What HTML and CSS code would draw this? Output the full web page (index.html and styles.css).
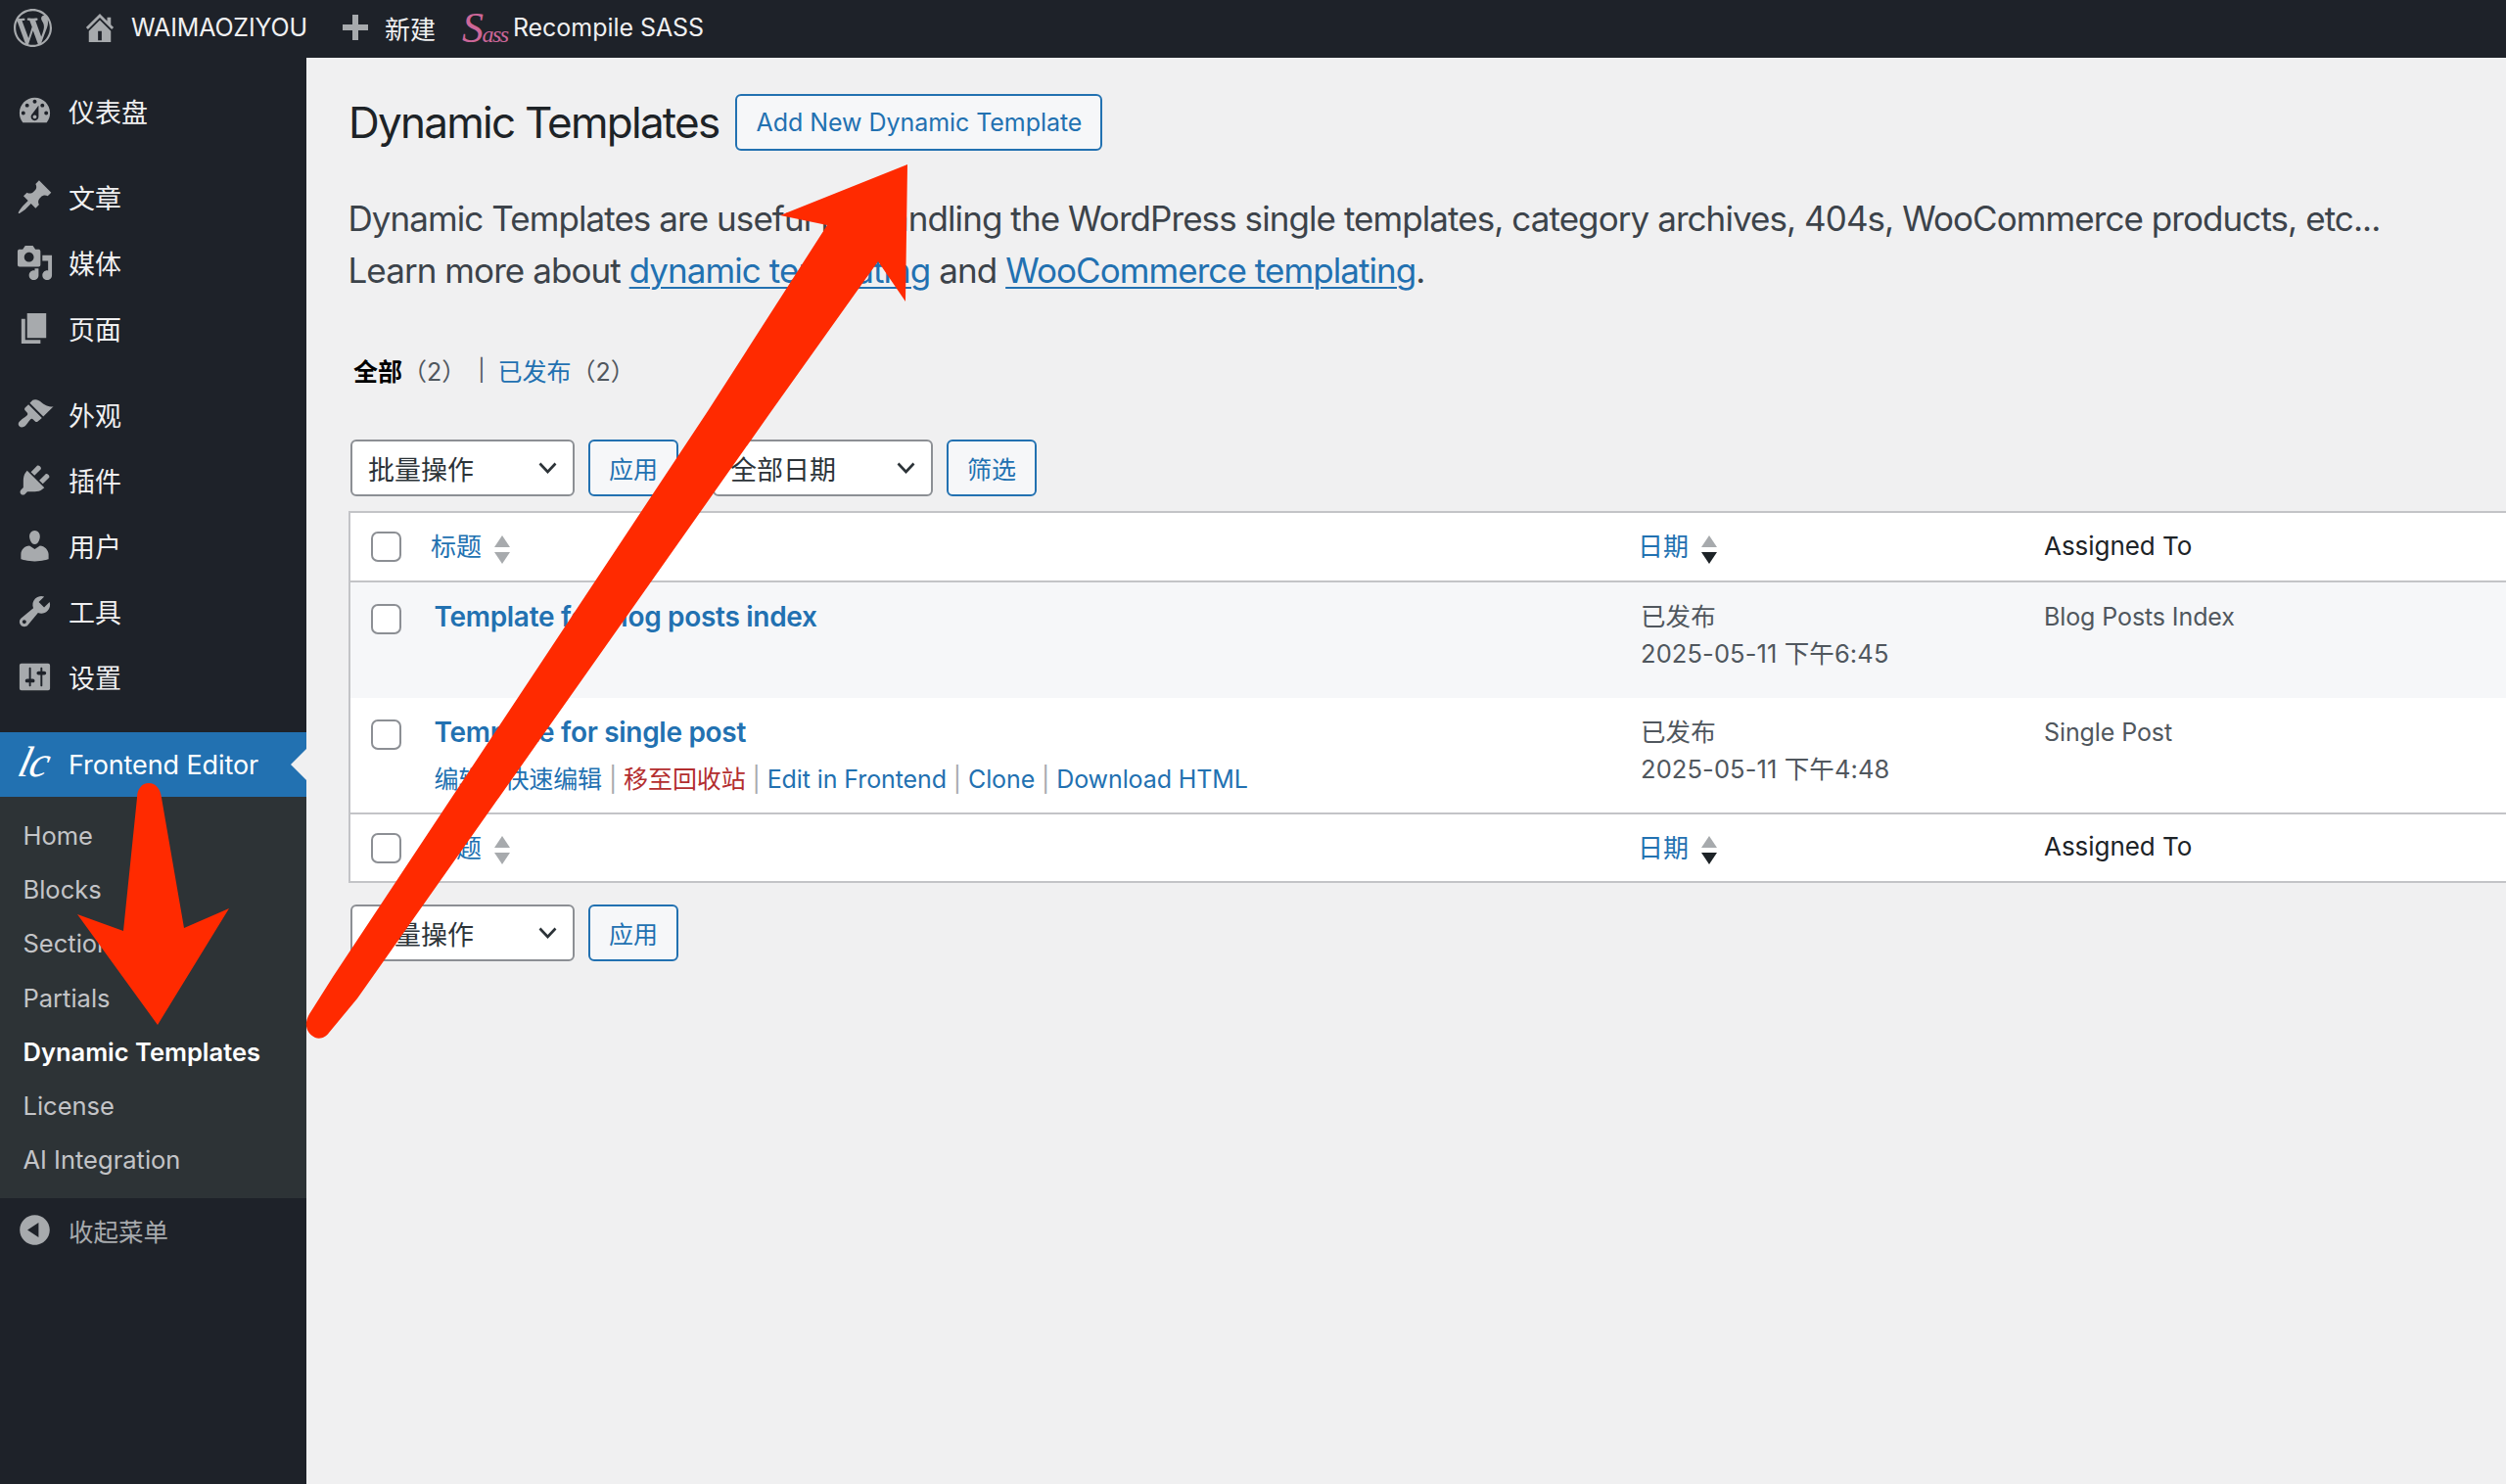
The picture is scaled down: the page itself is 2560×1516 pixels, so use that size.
FILE: index.html
```html
<!DOCTYPE html>
<html lang="zh-CN">
<head>
<meta charset="utf-8">
<title>Dynamic Templates</title>
<link rel="stylesheet" href="styles.css">
</head>
<body>
<header class="adminbar">
  <svg class="ab-wp" viewBox="0 0 20 20"><path d="M20 10c0-5.51-4.49-10-10-10C4.48 0 0 4.49 0 10c0 5.52 4.48 10 10 10 5.51 0 10-4.48 10-10zM7.78 15.37L4.37 6.22c.55-.02 1.17-.08 1.17-.08.5-.06.44-1.13-.06-1.11 0 0-1.45.11-2.37.11-.18 0-.37 0-.58-.01C4.12 2.69 6.87 1.11 10 1.11c2.33 0 4.45.87 6.05 2.34-.68-.11-1.65.39-1.65 1.58 0 .74.45 1.36.9 2.1.35.61.55 1.36.55 2.46 0 1.49-1.4 5-1.4 5l-3.03-8.37c.54-.02.82-.17.82-.17.5-.05.44-1.25-.06-1.22 0 0-1.44.12-2.38.12-.87 0-2.33-.12-2.33-.12-.5-.03-.56 1.2-.06 1.22l.92.08 1.26 3.41zM17.41 10c.24-.64.74-1.87.43-4.25.7 1.29 1.05 2.71 1.05 4.25 0 3.29-1.73 6.24-4.4 7.78.97-2.59 1.94-5.2 2.92-7.78zM6.1 18.09C3.12 16.65 1.11 13.53 1.11 10c0-1.3.23-2.48.72-3.59C3.25 10.3 4.67 14.2 6.1 18.09zm4.03-6.63l2.58 6.98c-.86.29-1.76.45-2.71.45-.79 0-1.57-.11-2.29-.33.81-2.38 1.62-4.74 2.42-7.1z"/></svg>
  <svg class="ab-home" viewBox="2 2 16 16"><path d="M16 8.5l1.53 1.53-1.06 1.06L10 4.62l-6.47 6.47-1.06-1.06L10 2.5l4 4v-2h2v4zm-6-2.46l6 5.99V18H4v-6.03zM11 17v-5H9v5h2z"/></svg>
  <span class="ab-site">WAIMAOZIYOU</span>
  <svg class="ab-plus" viewBox="0 0 26 26"><path d="M10 0h6v10h10v6H16v10h-6V16H0v-6h10z"/></svg>
  <span class="ab-new">新建</span>
  <span class="ab-sass">Sass</span>
  <span class="ab-recompile">Recompile SASS</span>
</header>

<div class="layout">
  <nav class="sidebar">
    <ul class="menu">
      <li class="item"><svg class="mi" viewBox="0 0 20 20"><path d="M3.76 16h12.48c1.1-1.37 1.76-3.11 1.76-5 0-4.42-3.58-8-8-8s-8 3.58-8 8c0 1.89.66 3.63 1.76 5zM10 4c.55 0 1 .45 1 1s-.45 1-1 1-1-.45-1-1 .45-1 1-1zM6 6c.55 0 1 .45 1 1s-.45 1-1 1-1-.45-1-1 .45-1 1-1zm8 0c.55 0 1 .45 1 1s-.45 1-1 1-1-.45-1-1 .45-1 1-1zm-5.37 5.55L12 7v6c0 1.1-.9 2-2 2s-2-.9-2-2c0-.57.24-1.08.63-1.45zM4 10c.55 0 1 .45 1 1s-.45 1-1 1-1-.45-1-1 .45-1 1-1zm12 0c.55 0 1 .45 1 1s-.45 1-1 1-1-.45-1-1 .45-1 1-1zm-5 3c0-.55-.45-1-1-1s-1 .45-1 1 .45 1 1 1 1-.45 1-1z"/></svg>仪表盘</li>
      <li class="sep"></li>
      <li class="item"><svg class="mi" viewBox="0 0 20 20"><path d="M10.44 3.02l1.82-1.82 6.36 6.35-1.83 1.82c-1.05-.68-2.48-.57-3.41.36l-.75.75c-.92.93-1.04 2.35-.35 3.41l-1.83 1.82-2.41-2.41-2.8 2.79c-.42.42-3.38 2.71-3.8 2.29s1.86-3.39 2.28-3.81l2.79-2.79L4.1 9.36l1.83-1.82c1.05.69 2.48.57 3.4-.36l.75-.75c.93-.92 1.05-2.35.36-3.41z"/></svg>文章</li>
      <li class="item"><svg class="mi" viewBox="0 0 20 20"><path d="M13 11V4c0-.55-.45-1-1-1h-1.67L9 1H5L3.67 3H2c-.55 0-1 .45-1 1v7c0 .55.45 1 1 1h10c.55 0 1-.45 1-1zM7 4.5c1.38 0 2.5 1.12 2.5 2.5S8.38 9.5 7 9.5 4.5 8.38 4.5 7 5.62 4.5 7 4.5zM14 6h5v10.5c0 1.38-1.12 2.5-2.5 2.5S14 17.88 14 16.5s1.12-2.5 2.5-2.5c.17 0 .34.02.5.05V9h-3V6zm-4 8.05V13h2v3.5c0 1.38-1.12 2.5-2.5 2.5S7 17.88 7 16.5 8.12 14 9.5 14c.17 0 .34.02.5.05z"/></svg>媒体</li>
      <li class="item"><svg class="mi" viewBox="0 0 20 20"><path d="M6 15V2h10v13H6zm-1 1h8v2H3V5h2v11z"/></svg>页面</li>
      <li class="sep"></li>
      <li class="item"><svg class="mi" viewBox="0 0 20 20"><path d="M14.48 11.06L7.41 3.99l1.5-1.5c.5-.56 2.3-.47 3.51.32 1.21.8 1.43 1.28 2.91 2.1 1.18.64 2.45 1.26 4.45.85zm-.71.71L6.7 4.7 4.93 6.47c-.39.39-.39 1.02 0 1.41l1.06 1.06c.39.39.39 1.03 0 1.42-.6.6-1.43 1.11-2.21 1.69-.35.26-.7.53-1.01.84C1.43 13.71.96 15.12 1.98 16.14c.75.75 2.2.59 3.21-.42.31-.31.58-.66.84-1.01.58-.78 1.09-1.61 1.69-2.21.39-.39 1.03-.39 1.42 0l1.06 1.06c.39.39 1.02.39 1.41 0z"/></svg>外观</li>
      <li class="item"><svg class="mi" viewBox="0 0 20 20"><path d="M13.11 4.36L9.87 7.6 8 5.73l3.24-3.24c.35-.34 1.05-.2 1.56.32.52.51.66 1.21.31 1.55zm-8 1.77l.91-1.12 9.01 9.01-1.19.84c-.71.71-2.63 1.16-3.82 1.16H6.14L4.9 17.26c-.59.59-1.54.59-2.12 0-.59-.58-.59-1.53 0-2.12l1.24-1.24v-3.88c0-1.13.4-3.19 1.09-3.89zm7.26 3.97l3.24-3.24c.34-.35 1.04-.21 1.55.31.52.51.66 1.21.31 1.55l-3.24 3.25z"/></svg>插件</li>
      <li class="item"><svg class="mi" viewBox="0 0 20 20"><path d="M10 9.25c-2.27 0-2.73-3.44-2.73-3.44C7 4.02 7.82 2 9.97 2c2.16 0 2.98 2.02 2.71 3.81 0 0-.41 3.44-2.68 3.44zm0 2.57L12.72 10c2.39 0 4.52 2.33 4.52 4.53v2.49s-3.65 1.13-7.24 1.13c-3.65 0-7.24-1.13-7.24-1.13v-2.49c0-2.25 1.94-4.48 4.47-4.48z"/></svg>用户</li>
      <li class="item"><svg class="mi" viewBox="0 0 20 20"><path d="M16.68 9.77c-1.34 1.34-3.3 1.67-4.95.99l-5.41 6.52c-.99.99-2.59.99-3.58 0s-.99-2.59 0-3.57l6.52-5.42c-.68-1.65-.35-3.61.99-4.95 1.28-1.28 3.12-1.62 4.72-1.06l-2.89 2.89 2.82 2.82 2.86-2.87c.53 1.58.18 3.39-1.08 4.65zM3.81 16.21c.4.39 1.04.39 1.43 0 .4-.4.4-1.04 0-1.43-.39-.4-1.03-.4-1.43 0-.39.39-.39 1.03 0 1.43z"/></svg>工具</li>
      <li class="item"><svg class="mi" viewBox="0 0 20 20"><path d="M18 16V4c0-.55-.45-1-1-1H3c-.55 0-1 .45-1 1v12c0 .55.45 1 1 1h14c.55 0 1-.45 1-1zM8 11h1c.55 0 1 .45 1 1s-.45 1-1 1H8v1.5c0 .28-.22.5-.5.5s-.5-.22-.5-.5V13H6c-.55 0-1-.45-1-1s.45-1 1-1h1V5.5c0-.28.22-.5.5-.5s.5.22.5.5V11zm5-2h-1c-.55 0-1-.45-1-1s.45-1 1-1h1V5.5c0-.28.22-.5.5-.5s.5.22.5.5V7h1c.55 0 1 .45 1 1s-.45 1-1 1h-1v5.5c0 .28-.22.5-.5.5s-.5-.22-.5-.5V9z"/></svg>设置</li>
      <li class="sep sep-last"></li>
      <li class="item active"><span class="lc">lc</span>Frontend Editor</li>
      <li class="submenu">
        <a>Home</a><a>Blocks</a><a>Sections</a><a>Partials</a><a class="current">Dynamic Templates</a><a>License</a><a>AI Integration</a>
      </li>
      <li class="item collapse"><svg class="mi" viewBox="0 0 20 20"><path d="M10 2.16c4.33 0 7.84 3.51 7.84 7.84s-3.51 7.84-7.84 7.84S2.16 14.33 2.16 10 5.71 2.16 10 2.16zm2 11.72V6.12L6.18 9.97z"/></svg>收起菜单</li>
    </ul>
  </nav>

  <main class="content">
    <div class="head">
      <h1>Dynamic Templates</h1>
      <a class="btn btn-add">Add New Dynamic Template</a>
    </div>
    <p class="intro">Dynamic Templates are useful for handling the WordPress single templates, category archives, 404s, WooCommerce products, etc...<br>Learn more about <a>dynamic templating</a> and <a>WooCommerce templating</a>.</p>
    <div class="views"><b>全部</b><span class="count">（2）</span><span class="bar">|</span><a>已发布</a><span class="count">（2）</span></div>

    <div class="toolbar">
      <div class="select sel-bulk"><span>批量操作</span><svg class="chev" viewBox="0 0 19 12"><path d="M1.5 1.5l8 8.5 8-8.5"/></svg></div>
      <a class="btn btn-apply">应用</a>
      <div class="select sel-date"><span>全部日期</span><svg class="chev" viewBox="0 0 19 12"><path d="M1.5 1.5l8 8.5 8-8.5"/></svg></div>
      <a class="btn btn-apply">筛选</a>
    </div>

    <table class="list">
      <colgroup><col class="c-cb"><col class="c-title"><col class="c-date"><col class="c-assign"></colgroup>
      <thead>
        <tr>
          <td class="cb"><input type="checkbox"></td>
          <th class="t-head"><a>标题</a><svg class="sort" viewBox="0 0 16 29"><path class="s-up" d="M8 0l8 12H0z"/><path class="s-down" d="M0 17h16L8 29z"/></svg></th>
          <th class="d-head"><a>日期</a><svg class="sort" viewBox="0 0 16 29"><path class="s-up" d="M8 0l8 12H0z"/><path class="s-active" d="M0 17h16L8 29z"/></svg></th>
          <th class="plain">Assigned To</th>
        </tr>
      </thead>
      <tbody>
        <tr class="alt">
          <td class="cb"><input type="checkbox"></td>
          <td class="title"><a class="row-title">Template for blog posts index</a></td>
          <td class="date">已发布<br>2025-05-11 下午6:45</td>
          <td>Blog Posts Index</td>
        </tr>
        <tr class="last">
          <td class="cb"><input type="checkbox"></td>
          <td class="title"><a class="row-title">Template for single post</a>
            <div class="actions"><a>编辑</a> | <a>快速编辑</a> | <a class="trash">移至回收站</a> | <a>Edit in Frontend</a> | <a>Clone</a> | <a>Download HTML</a></div>
          </td>
          <td class="date">已发布<br>2025-05-11 下午4:48</td>
          <td>Single Post</td>
        </tr>
      </tbody>
      <tfoot>
        <tr>
          <td class="cb"><input type="checkbox"></td>
          <th class="t-head"><a>标题</a><svg class="sort" viewBox="0 0 16 29"><path class="s-up" d="M8 0l8 12H0z"/><path class="s-down" d="M0 17h16L8 29z"/></svg></th>
          <th class="d-head"><a>日期</a><svg class="sort" viewBox="0 0 16 29"><path class="s-up" d="M8 0l8 12H0z"/><path class="s-active" d="M0 17h16L8 29z"/></svg></th>
          <th class="plain">Assigned To</th>
        </tr>
      </tfoot>
    </table>

    <div class="toolbar toolbar-bottom">
      <div class="select sel-bulk"><span>批量操作</span><svg class="chev" viewBox="0 0 19 12"><path d="M1.5 1.5l8 8.5 8-8.5"/></svg></div>
      <a class="btn btn-apply">应用</a>
    </div>
  </main>
</div>

<svg class="annotations" viewBox="0 0 2560 1516">
  <path d="M927 168L797 220L845 230L723 420L340 998L316 1036C310 1046 313 1056 322 1060C328 1062 333 1059 336 1055L365 1020L788 420L897 267L925 308z"/>
  <path d="M140 815C140 806 145 800 152 800C159 800 164 806 165 815L188 948L234 928L161 1047L79 934L126 951z"/>
</svg>
</body>
</html>
```

FILE: styles.css
```css
* { box-sizing: border-box; }
html, body { margin: 0; height: 100%; }
body {
  width: 2560px;
  height: 1516px;
  overflow: hidden;
  position: relative;
  display: flex;
  flex-direction: column;
  background: #f0f0f1;
  font-family: Inter, "Noto Sans CJK SC", sans-serif;
  font-size: 25px;
  color: #3c434a;
}
a { color: #2271b1; text-decoration: none; }

/* admin bar */
.adminbar {
  flex: 0 0 59px;
  display: flex;
  align-items: center;
  background: #1e2229;
  color: #f0f0f1;
  font-size: 25px;
  padding: 0 0 3px 14px;
}
.adminbar svg { fill: #a7aaad; flex: none; }
.ab-wp { width: 39px; height: 39px; }
.ab-home { width: 30px; height: 30px; margin-left: 34px; }
.ab-site { margin-left: 17px; letter-spacing: -0.15px; }
.ab-plus { width: 26px; height: 26px; margin-left: 36px; }
.ab-new { margin-left: 17px; font-size: 26px; }
.ab-sass {
  display: inline-block;
  margin-left: 27px;
  width: 52px;
  font-family: "Liberation Serif", serif;
  font-style: italic;
  font-size: 24px;
  letter-spacing: -1.5px;
  color: #cd6799;
}
.ab-sass::first-letter { font-size: 44px; }
.ab-recompile { letter-spacing: -0.05px; }

.layout { flex: 1; display: flex; min-height: 0; }

/* sidebar */
.sidebar {
  flex: 0 0 313px;
  background: #1e2229;
  color: #f0f0f1;
  padding-top: 21px;
}
.menu { list-style: none; margin: 0; padding: 0; }
.item {
  height: 67px;
  display: flex;
  align-items: center;
  font-size: 27px;
  padding-left: 16px;
}
.mi { width: 39px; height: 39px; fill: #a7aaad; margin-right: 15px; flex: none; }
.sep { height: 21px; }
.sep-last { height: 23px; }
.active {
  position: relative;
  height: 66px;
  background: #2271b1;
  color: #fff;
  font-size: 27px;
  letter-spacing: -0.1px;
}
.active::after {
  content: "";
  position: absolute;
  right: 0;
  top: 17px;
  border: 16px solid transparent;
  border-left-width: 0;
  border-right-color: #f0f0f1;
}
.lc {
  width: 54px;
  font-family: "Liberation Serif", serif;
  font-style: italic;
  font-size: 44px;
  line-height: 1;
  letter-spacing: -1px;
  padding-left: 4px;
  margin-top: -4px;
  transform: skewX(-14deg);
}
.submenu {
  display: flex;
  flex-direction: column;
  background: #2d3336;
  padding: 12px 0;
}
.submenu a {
  height: 55.2px;
  line-height: 55.2px;
  padding-left: 23.5px;
  font-size: 25.5px;
  color: #c3c4c7;
}
.submenu .current { color: #fff; font-weight: 600; }
.collapse { color: #a7aaad; font-size: 25.5px; height: 65px; }

/* main */
.content { flex: 1; min-width: 0; padding-left: 43px; }
.head { display: flex; align-items: center; gap: 17px; margin-top: 37px; }
h1 { margin: 0; font-size: 44px; font-weight: 400; color: #1d2327; letter-spacing: -1.75px; line-height: 57px; }
.btn {
  display: flex;
  align-items: center;
  justify-content: center;
  height: 58px;
  border: 2px solid #2271b1;
  border-radius: 6px;
  background: #f6f7f9;
  color: #2271b1;
}
.btn-add { width: 375px; font-size: 25px; letter-spacing: -0.05px; }
.intro { margin: 43px 0 0 -0.5px; font-size: 35px; line-height: 53px; letter-spacing: -0.93px; }
.intro a { text-decoration: underline; text-decoration-thickness: 2px; text-underline-offset: 4px; }
.views { display: flex; align-items: center; height: 40px; margin: 55px 0 0 5px; font-size: 25px; }
.views b { color: #000; font-weight: 700; }
.count { color: #50575e; }
.bar { margin: 0 13px 0 12px; font-size: 22px; color: #50575e; }

.toolbar { display: flex; gap: 14px; margin-top: 51px; padding-left: 2px; }
.toolbar-bottom { margin-top: 22px; }
.select {
  display: flex;
  align-items: center;
  justify-content: space-between;
  height: 58px;
  padding: 0 16px 0 16px;
  background: #fff;
  border: 2px solid #8c8f94;
  border-radius: 6px;
  color: #2c3338;
  font-size: 27px;
}
.sel-bulk { width: 229px; }
.sel-date { width: 225px; margin-left: 21px; }
.chev { width: 19px; height: 12px; fill: none; stroke: #2c3338; stroke-width: 2.6; }
.btn-apply { width: 92px; font-size: 25px; }

/* table */
.list {
  width: 2300px;
  margin-top: 15px;
  table-layout: fixed;
  border-collapse: separate;
  border-spacing: 0;
  background: #fff;
  border: 2px solid #c3c4c7;
  border-right: 0;
}
.c-cb { width: 67px; }
.c-title { width: 1234px; }
.c-date { width: 412px; }
.list th { font-weight: 400; text-align: left; padding: 0 0 3px 15px; vertical-align: middle; white-space: nowrap; font-size: 26px; }
.list thead th, .list thead td { border-bottom: 2px solid #c3c4c7; height: 71px; }
.list tfoot th, .list tfoot td { border-top: 2px solid #c3c4c7; height: 70px; }
.list th.d-head { padding-left: 14px; }
.list th.plain { color: #1d2327; font-size: 26px; padding-left: 17px; letter-spacing: -0.05px; }
.list tbody td { height: 118px; padding: 16px 16px 0 17px; vertical-align: top; line-height: 38px; font-size: 25px; color: #50575e; letter-spacing: -0.1px; }
.list tbody .last td { height: 117px; }
.list tbody td.title { padding-left: 18.5px; }
.list tbody td.date { font-size: 25.5px; letter-spacing: 0.1px; }
.list td.cb { padding: 0; text-align: center; vertical-align: middle; }
.list tbody td.cb { padding: 22px 0 0; vertical-align: top; }
.alt td { background: #f6f7f9; }
input[type="checkbox"] {
  appearance: none;
  display: block;
  width: 31px;
  height: 31px;
  margin: 0 auto 0 21px;
  border: 2px solid #8c8f94;
  border-radius: 7px;
  background: #fff;
}
.sort { width: 16px; height: 29px; margin-left: 13px; vertical-align: middle; }
.s-up, .s-down { fill: #a7aaad; }
.s-active { fill: #1d2327; }
.row-title { font-weight: 600; font-size: 28px; letter-spacing: -0.3px; }
.actions { margin-top: 9px; font-size: 25px; color: #a7aaad; white-space: nowrap; }
.trash { color: #b32d2e; }

/* red annotation arrows */
.annotations { position: absolute; inset: 0; width: 2560px; height: 1516px; pointer-events: none; }
.annotations path { fill: #ff2a00; }
```
